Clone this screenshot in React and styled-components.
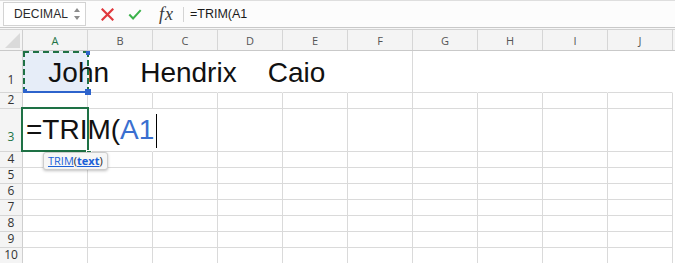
import React from "react";
import styled, { createGlobalStyle } from "styled-components";

const Global = createGlobalStyle`
  html, body { margin: 0; padding: 0; background: #fff; }
  body { font-family: "Liberation Sans", Arial, sans-serif; }
  * { box-sizing: border-box; }
`;

const Page = styled.div`
  width: 675px;
  height: 263px;
  overflow: hidden;
  background: #fff;
`;

const Toolbar = styled.div`
  height: 28px;
  display: flex;
  align-items: center;
  background: #fcfcfc;
  border-top: 1px solid #dedede;
  border-bottom: 1px solid #c9c9c9;
`;

const Strip = styled.div`
  height: 2px;
  background: #f7f7f7;
  border-bottom: 1px solid #d2d2d2;
`;

const NameBox = styled.div`
  margin-left: 3px;
  width: 83px;
  height: 24px;
  background: #fff;
  border: 1px solid #d3d3d3;
  display: flex;
  align-items: center;
  justify-content: space-between;
  padding: 0 5px 0 10px;
  font-size: 12px;
  color: #2a2a2a;
  letter-spacing: 0.1px;
`;

const Spinner = styled.div`
  display: flex;
  flex-direction: column;
  gap: 4px;
`;

const Tri = styled.span`
  width: 0;
  height: 0;
  border-left: 3.5px solid transparent;
  border-right: 3.5px solid transparent;
  ${(p) =>
    p.$down
      ? "border-top: 4.5px solid #8c8c8c;"
      : "border-bottom: 4.5px solid #8c8c8c;"}
`;

const IconButton = styled.div`
  width: 14px;
  height: 14px;
  display: flex;
  align-items: center;
  justify-content: center;
  margin-left: ${(p) => p.$ml}px;
`;

const Fx = styled.span`
  margin-left: 17px;
  font-family: "Liberation Serif", "Times New Roman", serif;
  font-style: italic;
  font-size: 18px;
  color: #3a3a3a;
  letter-spacing: 1px;
`;

const Divider = styled.div`
  width: 1px;
  height: 15px;
  background: #d4d4d4;
  margin-left: 9px;
`;

const FormulaText = styled.span`
  margin-left: 6px;
  font-size: 12.5px;
  color: #1a1a1a;
`;

const Row = styled.div`
  display: flex;
  height: ${(p) => p.$h}px;
`;

const HeaderRow = styled(Row)`
  background: #f4f4f4;
  border-bottom: 1px solid #c9c9c9;
`;

const Corner = styled.div`
  width: 23px;
  flex: none;
  border-right: 1px solid #cfcfcf;
  position: relative;
  display: flex;
  align-items: flex-end;
  justify-content: flex-end;
  padding: 0 2px 2px 0;
`;

const CornerTri = styled.div`
  width: 0;
  height: 0;
  border-left: 15px solid transparent;
  border-bottom: 15px solid #dadada;
`;

const ColHead = styled.div`
  width: 65px;
  flex: none;
  border-right: 1px solid #d6d6d6;
  display: flex;
  align-items: center;
  justify-content: center;
  font-family: "Open Sans", "Liberation Sans", sans-serif;
  font-size: 11px;
  color: ${(p) => (p.$active ? "#217346" : "#555")};
  padding-top: 1px;
`;

const RowHead = styled.div`
  width: 23px;
  flex: none;
  background: #f4f4f4;
  border-right: 1px solid #cfcfcf;
  border-bottom: 1px solid #d6d6d6;
  display: flex;
  align-items: flex-end;
  justify-content: center;
  padding-bottom: ${(p) => p.$pb ?? 1}px;
  font-family: "Open Sans", "Liberation Sans", sans-serif;
  font-size: 12px;
  line-height: 14px;
  color: ${(p) => (p.$active ? "#217346" : "#333")};
`;

const Cell = styled.div`
  width: 65px;
  flex: none;
  position: relative;
  border-right: 1px solid ${(p) => (p.$noRight ? "transparent" : "#dadada")};
  border-bottom: 1px solid #dadada;
  background: ${(p) => p.$bg || "transparent"};
`;

const BigText = styled.div`
  position: absolute;
  left: ${(p) => p.$left}px;
  bottom: ${(p) => p.$bottom}px;
  white-space: pre;
  font-family: "Liberation Sans", Arial, sans-serif;
  font-size: 28px;
  line-height: 28px;
  color: #111;
  z-index: 2;
  display: flex;
  align-items: center;
`;

const Ref = styled.span`
  color: #3a6fd0;
`;

const Caret = styled.span`
  display: inline-block;
  width: 1px;
  height: 34px;
  background: #000;
  margin-left: 2px;
  margin-top: 2px;
`;

const CopyMarquee = styled.div`
  position: absolute;
  left: 0;
  top: 0;
  right: -2px;
  bottom: -1px;
  border: 2px dashed #1e7145;
  border-bottom-color: #2d63cc;
  border-bottom-style: solid;
  z-index: 3;
`;

const Handle = styled.div`
  position: absolute;
  width: ${(p) => p.$s}px;
  height: ${(p) => p.$s}px;
  background: #2d63cc;
  z-index: 4;
  ${(p) => p.$pos}
`;

const ActiveBorder = styled.div`
  position: absolute;
  left: -2px;
  top: -2px;
  right: -2px;
  bottom: -1px;
  border: 2px solid #1e7145;
  z-index: 3;
`;

const FillHandle = styled.div`
  position: absolute;
  right: -5px;
  bottom: -4px;
  width: 6px;
  height: 5px;
  background: #1e7145;
  border: 1px solid #fff;
  z-index: 4;
`;

const Tooltip = styled.div`
  position: absolute;
  left: 20px;
  top: 43px;
  z-index: 5;
  background: #f6f6f6;
  border: 1px solid #cdcdcd;
  border-radius: 3px;
  box-shadow: 0 1px 3px rgba(0, 0, 0, 0.25);
  padding: 1px 4px 2px 4px;
  font-family: "Open Sans", "Liberation Sans", sans-serif;
  font-size: 11px;
  line-height: 13px;
  color: #222;
  white-space: nowrap;
`;

const Link = styled.span`
  color: #1a5fd6;
  text-decoration: underline;
  font-weight: ${(p) => (p.$bold ? 700 : 400)};
`;

const cols = ["A", "B", "C", "D", "E", "F", "G", "H", "I", "J"];

function CloseIcon() {
  return (
    <svg width="13" height="13" viewBox="0 0 13 13">
      <path d="M1.5 1.5 L11.5 11.5 M11.5 1.5 L1.5 11.5" stroke="#e0383d" strokeWidth="2.2" strokeLinecap="square" fill="none" />
    </svg>
  );
}

function CheckIcon() {
  return (
    <svg width="16" height="13" viewBox="0 0 16 13">
      <path d="M1.5 6.5 L5.8 11 L14.5 1.5" stroke="#3bb24a" strokeWidth="2.3" fill="none" />
    </svg>
  );
}

function EmptyRow({ n, h }) {
  return (
    <Row $h={h}>
      <RowHead>{n}</RowHead>
      {cols.map((c) => (
        <Cell key={c} />
      ))}
    </Row>
  );
}

export default function App() {
  return (
    <Page>
      <Global />
      <Toolbar>
        <NameBox>
          <span>DECIMAL</span>
          <Spinner>
            <Tri />
            <Tri $down />
          </Spinner>
        </NameBox>
        <IconButton $ml={14}>
          <CloseIcon />
        </IconButton>
        <IconButton $ml={14}>
          <CheckIcon />
        </IconButton>
        <Fx>fx</Fx>
        <Divider />
        <FormulaText>=TRIM(A1</FormulaText>
      </Toolbar>
      <Strip />
      <HeaderRow $h={21}>
        <Corner>
          <CornerTri />
        </Corner>
        {cols.map((c) => (
          <ColHead key={c} $active={c === "A"}>
            {c}
          </ColHead>
        ))}
      </HeaderRow>

      <Row $h={42}>
        <RowHead $pb={5}>1</RowHead>
        <Cell $bg="#e6edf8" $noRight>
          <BigText $left={2} $bottom={5}>{"   John    Hendrix    Caio"}</BigText>
          <CopyMarquee />
          <Handle $s={4} $pos="right: -3px; top: 0;" />
          <Handle $s={4} $pos="left: 0; bottom: -1px;" />
          <Handle $s={6} $pos="right: -4px; bottom: -3px;" />
        </Cell>
        {cols.slice(1).map((c) => (
          <Cell key={c} $noRight={c !== "F"} />
        ))}
      </Row>

      <EmptyRow n={2} h={16} />

      <Row $h={43}>
        <RowHead $active $pb={7}>3</RowHead>
        <Cell $noRight>
          <ActiveBorder />
          <FillHandle />
          <BigText $left={3} $bottom={3}>
            =TRIM(<Ref>A1</Ref>
            <Caret />
          </BigText>
          <Tooltip>
            <Link>TRIM</Link>(<Link $bold>text</Link>)
          </Tooltip>
        </Cell>
        {cols.slice(1).map((c) => (
          <Cell key={c} $noRight={c === "B"} />
        ))}
      </Row>

      {[4, 5, 6, 7, 8, 9, 10].map((n) => (
        <EmptyRow key={n} n={n} h={16} />
      ))}
    </Page>
  );
}
